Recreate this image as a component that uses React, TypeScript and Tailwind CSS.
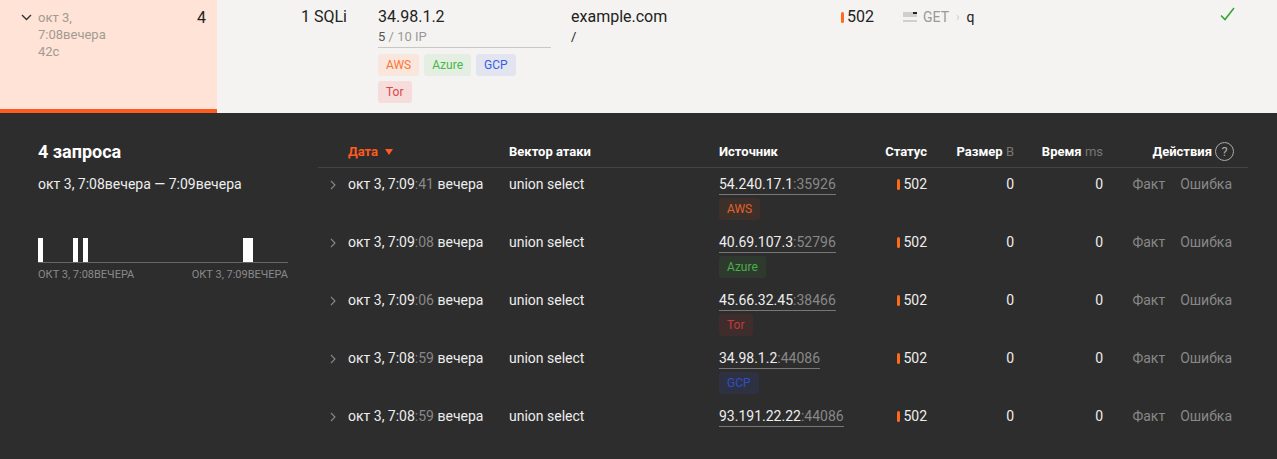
import React from "react";

type Row = {
  time: string;
  sec: string;
  ip: string;
  port: string;
  tag?: "AWS" | "Azure" | "Tor" | "GCP";
};

const rows: Row[] = [
  { time: "окт 3, 7:09", sec: ":41", ip: "54.240.17.1", port: ":35926", tag: "AWS" },
  { time: "окт 3, 7:09", sec: ":08", ip: "40.69.107.3", port: ":52796", tag: "Azure" },
  { time: "окт 3, 7:09", sec: ":06", ip: "45.66.32.45", port: ":38466", tag: "Tor" },
  { time: "окт 3, 7:08", sec: ":59", ip: "34.98.1.2", port: ":44086", tag: "GCP" },
  { time: "окт 3, 7:08", sec: ":59", ip: "93.191.22.22", port: ":44086" },
];

const lightTag: Record<string, string> = {
  AWS: "bg-[#f9e6dc] text-[#ff7433]",
  Azure: "bg-[#e4eee2] text-[#46b846]",
  GCP: "bg-[#e2e4f0] text-[#3a5de0]",
  Tor: "bg-[#f6dcda] text-[#e0434a]",
};

const darkTag: Record<string, string> = {
  AWS: "bg-[#3d302a] text-[#e2622b]",
  Azure: "bg-[#2f3a2f] text-[#4aad4a]",
  GCP: "bg-[#2e3142] text-[#2f4fc8]",
  Tor: "bg-[#3f2c2c] text-[#c33a3a]",
};

const StatusBar = () => <span className="inline-block w-[3px] h-[11px] rounded-full bg-[#ff6a1a] mr-[3px]" />;

const Tag = ({ name, cls }: { name: string; cls: string }) => (
  <span className={`inline-flex items-center h-[22px] px-[8px] rounded-[3px] text-[12px] ${cls}`}>{name}</span>
);

export default function App() {
  return (
    <div className="w-[1277px] h-[459px] overflow-hidden bg-[#2d2d2d] font-['Roboto',sans-serif]">
      {/* attack summary row */}
      <div className="flex h-[113px] bg-[#f4f3f1] text-[#222]">
        <div className="w-[217px] flex bg-[#fee3d6] border-b-[4px] border-[#ff5a1f] pl-[21px] pr-[11px] pt-[9px]">
          <svg width="11" height="7" viewBox="0 0 11 7" className="mt-[5px] mr-[6px]">
            <path d="M1 1l4.5 4.5L10 1" fill="none" stroke="#333" strokeWidth="1.4" />
          </svg>
          <div className="text-[13px] leading-[17px] text-[#a39a93]">
            <div>окт 3,</div>
            <div>7:08вечера</div>
            <div>42с</div>
          </div>
          <div className="ml-auto text-[16px] leading-[18px]">4</div>
        </div>
        <div className="w-[161px] pl-[84px] pt-[7px] text-[16px] leading-[20px]">1 SQLi</div>
        <div className="w-[193px] pt-[7px]">
          <div className="w-[173px] border-b border-[#c9c7c4] pb-[2px]">
            <div className="text-[16px] leading-[20px]">34.98.1.2</div>
            <div className="text-[13px] leading-[17px] pt-[1px] text-[#999]">
              <span className="text-[#555]">5</span> / 10 IP
            </div>
          </div>
          <div className="flex flex-wrap gap-x-[5px] gap-y-[5px] mt-[6px] w-[150px]">
            <Tag name="AWS" cls={lightTag.AWS} />
            <Tag name="Azure" cls={lightTag.Azure} />
            <Tag name="GCP" cls={lightTag.GCP} />
            <Tag name="Tor" cls={lightTag.Tor} />
          </div>
        </div>
        <div className="w-[270px] pt-[7px]">
          <div className="text-[16px] leading-[20px]">example.com</div>
          <div className="text-[13px] leading-[17px] pt-[1px]">/</div>
        </div>
        <div className="w-[62px] pt-[7px] flex items-start">
          <div className="flex items-center h-[20px] text-[16px]">
            <StatusBar />
            502
          </div>
        </div>
        <div className="flex-1 pt-[7px] flex items-start">
          <div className="flex items-center h-[20px] text-[14px]">
            <svg width="14" height="10" viewBox="0 0 14 10" className="mr-[6px]">
              <rect x="0" y="0" width="14" height="5" fill="#cfcfcf" />
              <rect x="10" y="0" width="4" height="2" fill="#222" />
              <rect x="0" y="8" width="14" height="2" fill="#cfcfcf" />
            </svg>
            <span className="text-[#999]">GET</span>
            <span className="text-[#ccc] mx-[7px] text-[12px]">›</span>
            <span className="text-[#222]">q</span>
          </div>
        </div>
        <div className="w-[57px] pt-[7px]">
          <svg width="15" height="15" viewBox="0 0 15 15">
            <path d="M1 8.5l4 4L14 1" fill="none" stroke="#2ea52e" strokeWidth="1.5" />
          </svg>
        </div>
      </div>

      {/* requests panel */}
      <div className="flex pt-[23px] text-white">
        <div className="w-[318px] pl-[38px]">
          <div className="mt-[6px] text-[18px] leading-[20px] font-bold">4 запроса</div>
          <div className="mt-[14px] text-[14px] leading-[17px] text-[#eee]">окт 3, 7:08вечера — 7:09вечера</div>
          <div className="mt-[45px] w-[250px]">
            <svg width="250" height="25" viewBox="0 0 250 25" className="block">
              <rect x="0" y="0" width="5" height="24" fill="#fff" />
              <rect x="35" y="0" width="5" height="24" fill="#fff" />
              <rect x="45" y="0" width="5" height="24" fill="#fff" />
              <rect x="205" y="0" width="10" height="24" fill="#fff" />
              <rect x="0" y="24" width="250" height="1" fill="#666" />
            </svg>
            <div className="mt-[6px] flex justify-between text-[11px] leading-[12px] text-[#8a8a8a]">
              <span>ОКТ 3, 7:08ВЕЧЕРА</span>
              <span>ОКТ 3, 7:09ВЕЧЕРА</span>
            </div>
          </div>
        </div>

        <div className="w-[930px]">
          <div className="flex items-center h-[32px] border-b border-[#444] text-[13px] font-bold">
            <div className="w-[30px]" />
            <div className="w-[161px] text-[#ff5a1f] flex items-center">
              Дата
              <svg width="8" height="6" viewBox="0 0 8 6" className="ml-[7px]">
                <path d="M0 0h8L4 6z" fill="#ff5a1f" />
              </svg>
            </div>
            <div className="w-[210px]">Вектор атаки</div>
            <div className="w-[148px]">Источник</div>
            <div className="w-[60px] text-right">Статус</div>
            <div className="w-[87px] text-right">
              Размер <span className="font-normal text-[#777]">B</span>
            </div>
            <div className="w-[89px] text-right">
              Время <span className="font-normal text-[#777]">ms</span>
            </div>
            <div className="flex-1 flex justify-end items-center pr-[14px]">
              Действия
              <span className="ml-[3px] w-[19px] h-[19px] rounded-full border border-[#aaa] text-[#aaa] font-normal text-[13px] flex items-center justify-center">
                ?
              </span>
            </div>
          </div>

          {rows.map((r, i) => (
            <div key={i} className="flex h-[58px] pt-[8px] text-[14px] leading-[17px]">
              <div className="w-[30px] pl-[12px] pt-[4px]">
                <svg width="6" height="10" viewBox="0 0 6 10">
                  <path d="M1 1l4 4-4 4" fill="none" stroke="#888" strokeWidth="1.1" />
                </svg>
              </div>
              <div className="w-[161px] text-[#eee]">
                {r.time}
                <span className="text-[#888]">{r.sec}</span> вечера
              </div>
              <div className="w-[210px] text-[#eee]">union select</div>
              <div className="w-[148px]">
                <span className="inline-block border-b border-[#777] pb-[1px] text-[#eee]">
                  {r.ip}
                  <span className="text-[#888]">{r.port}</span>
                </span>
                {r.tag && (
                  <div className="mt-[3px]">
                    <Tag name={r.tag} cls={darkTag[r.tag]} />
                  </div>
                )}
              </div>
              <div className="w-[60px] flex justify-end items-start">
                <div className="flex items-center h-[17px] text-[#eee]">
                  <StatusBar />
                  502
                </div>
              </div>
              <div className="w-[87px] text-right text-[#eee]">0</div>
              <div className="w-[89px] text-right text-[#eee]">0</div>
              <div className="flex-1 flex justify-end gap-[15px] pr-[16px] text-[#888]">
                <span>Факт</span>
                <span>Ошибка</span>
              </div>
            </div>
          ))}
        </div>
      </div>
    </div>
  );
}
